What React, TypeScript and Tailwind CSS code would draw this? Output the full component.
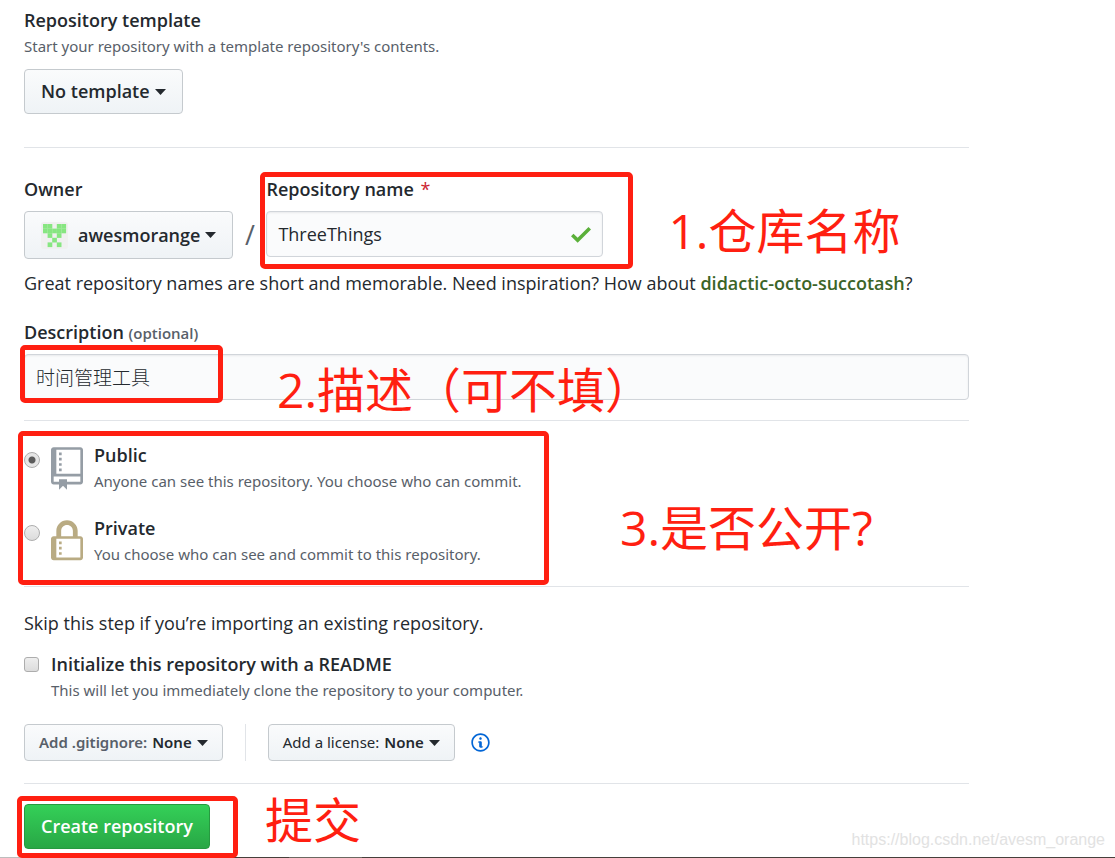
import { useState } from "react";
import type { ReactNode } from "react";

const btn =
  "flex items-center rounded border border-[#c5cace] bg-gradient-to-b from-[#fafbfc] to-[#eff3f6] font-semibold text-[#24292e]";

const field =
  "w-full h-[46px] rounded border border-[#d1d5da] bg-[#fafbfc] px-[11px] text-[#24292e] shadow-[inset_0_1px_2px_rgba(27,31,35,0.08)] outline-none";

function Caret() {
  return (
    <svg width="11" height="6" viewBox="0 0 11 6" fill="currentColor" aria-hidden="true">
      <path d="M0 0h11L5.5 6z" />
    </svg>
  );
}

function Identicon() {
  const rows = ["11011", "11111", "01010", "00100", "01010"];
  return (
    <svg width="27" height="27" viewBox="0 0 27 27" aria-hidden="true">
      <rect width="27" height="27" rx="3" fill="#f0f0f0" />
      {rows.map((row, y) =>
        row.split("").map((cell, x) =>
          cell === "1" ? (
            <rect
              key={`${x}-${y}`}
              x={2 + x * 4.6}
              y={2 + y * 4.6}
              width="4.7"
              height="4.7"
              fill="#87e681"
            />
          ) : null
        )
      )}
    </svg>
  );
}

function RepoIcon() {
  return (
    <svg width="32" height="43" viewBox="0 0 12 16" fill="#959da5" aria-hidden="true">
      <path
        fillRule="evenodd"
        d="M4 9H3V8h1v1zm0-3H3v1h1V6zm0-2H3v1h1V4zm0-2H3v1h1V2zm8-1v12c0 .55-.45 1-1 1H6v2l-1.5-1.5L3 16v-2H1c-.55 0-1-.45-1-1V1c0-.55.45-1 1-1h10c.55 0 1 .45 1 1zm-1 10H1v2h2v-1h3v1h5v-2zm0-10H2v9h9V1z"
      />
    </svg>
  );
}

function LockIcon() {
  return (
    <svg width="32" height="43" viewBox="0 0 12 16" fill="#b9ab83" aria-hidden="true">
      <path
        fillRule="evenodd"
        d="M4 13H3v-1h1v1zm8-6v7c0 .55-.45 1-1 1H1c-.55 0-1-.45-1-1V7c0-.55.45-1 1-1h1V4c0-2.2 1.8-4 4-4s4 1.8 4 4v2h1c.55 0 1 .45 1 1zM3.8 6h4.41V4c0-1.22-.98-2.2-2.2-2.2-1.22 0-2.2.98-2.2 2.2v2H3.8zM11 7H2v7h9V7zM4 8H3v1h1V8zm0 2H3v1h1v-1z"
      />
    </svg>
  );
}

function InfoIcon() {
  return (
    <svg width="19" height="21" viewBox="0 0 14 16" fill="#0366d6" aria-hidden="true">
      <path
        fillRule="evenodd"
        d="M6.3 5.69a.942.942 0 0 1-.28-.7c0-.28.09-.52.28-.7.19-.18.42-.28.7-.28.28 0 .52.09.7.28.18.19.28.42.28.7 0 .28-.09.52-.28.7a1 1 0 0 1-.7.3c-.28 0-.52-.11-.7-.3zM8 7.99c-.02-.25-.11-.48-.31-.69-.2-.19-.42-.3-.69-.31H6c-.27.02-.48.13-.69.31-.2.2-.3.44-.31.69h1v3c.02.27.11.5.31.69.2.2.42.31.69.31h1c.27 0 .48-.11.69-.31.2-.19.3-.42.31-.69H8V7.98v.01zM7 2.3c-3.14 0-5.7 2.54-5.7 5.68 0 3.14 2.56 5.7 5.7 5.7s5.7-2.55 5.7-5.7c0-3.15-2.56-5.69-5.7-5.69v.01zM7 .98c3.86 0 7 3.14 7 7s-3.14 7-7 7-7-3.12-7-7 3.14-7 7-7z"
      />
    </svg>
  );
}

// Red marker frame drawn on top of the form
function Frame({ className }: { className: string }) {
  return (
    <div
      className={`pointer-events-none absolute rounded-[5px] border-[5px] border-[#ff1f11] ${className}`}
    />
  );
}

function Note({ className, children }: { className: string; children: ReactNode }) {
  return (
    <p
      className={`pointer-events-none absolute whitespace-nowrap text-[48px] leading-[60px] text-[#ff1f11] ${className}`}
    >
      {children}
    </p>
  );
}

type VisibilityProps = {
  id: string;
  title: string;
  text: string;
  icon: ReactNode;
  checked: boolean;
  onChange: () => void;
};

function Visibility({ id, title, text, icon, checked, onChange }: VisibilityProps) {
  return (
    <div className="flex items-start">
      <input
        type="radio"
        id={id}
        name="visibility"
        checked={checked}
        onChange={onChange}
        className="mt-[11px] size-4 shrink-0 appearance-none rounded-full border border-[#adadad] bg-gradient-to-b from-[#eeeeee] to-[#dcdcdc] checked:bg-[radial-gradient(circle,#5c5c5c_0,#5c5c5c_3px,#e6e6e6_4px)]"
      />
      <div className="mt-[6px] ml-[11px] shrink-0">{icon}</div>
      <div className="ml-[11px]">
        <label htmlFor={id} className="block leading-7 font-semibold">
          {title}
        </label>
        <p className="font-['Noto_Sans',sans-serif] text-[15px] leading-6 text-[#586069]">{text}</p>
      </div>
    </div>
  );
}

export default function App() {
  const [visibility, setVisibility] = useState("public");

  return (
    <div className="relative overflow-hidden bg-white font-['Open_Sans','Noto_Sans_CJK_SC',sans-serif] text-[18px] text-[#24292e]">
      <form
        className="mx-6 max-w-[945px] pt-[6px] pb-2"
        onSubmit={(e) => e.preventDefault()}
      >
        <section className="border-b border-[#e1e4e8] pb-[33px]">
          <h2 className="leading-7 font-semibold">Repository template</h2>
          <p className="font-['Noto_Sans',sans-serif] text-[15px] leading-6 text-[#586069]">
            Start your repository with a template repository's contents.
          </p>
          <button type="button" aria-haspopup="menu" className={`${btn} mt-[11px] h-[45px] gap-[5px] px-4`}>
            No template <Caret />
          </button>
        </section>

        <section className="border-b border-[#e1e4e8] pt-[27px] pb-5">
          <div className="flex">
            <div>
              <span className="block leading-7 font-semibold">Owner</span>
              <button
                type="button"
                aria-haspopup="menu"
                className={`${btn} mt-2 h-12 gap-[5px] px-4`}
              >
                <Identicon />
                <span className="ml-[5px]">awesmorange</span>
                <Caret />
              </button>
            </div>
            <span className="mt-9 w-[33px] text-center text-[27px] leading-[48px] text-[#586069]">
              /
            </span>
            <div className="relative w-[337px]">
              <label htmlFor="repo-name" className="block leading-7 font-semibold">
                Repository name <span className="ml-[2px] font-normal text-[#cb2431]">*</span>
              </label>
              <div className="relative mt-2">
                <input
                  id="repo-name"
                  type="text"
                  defaultValue="ThreeThings"
                  className={`${field} text-[18px]`}
                />
                <svg
                  className="absolute top-[10px] right-3"
                  width="20"
                  height="27"
                  viewBox="0 0 12 16"
                  fill="#5bb03a"
                  aria-hidden="true"
                >
                  <path d="M12 5l-8 8-4-4 1.5-1.5L4 10l6.5-6.5L12 5z" />
                </svg>
              </div>
              <Frame className="-top-[3px] -right-[30px] -bottom-[10px] -left-[6px]" />
              <Note className="top-[26px] left-[402px]">1.仓库名称</Note>
            </div>
          </div>
          <p className="mt-[10px] leading-7">
            Great repository names are short and memorable. Need inspiration? How about{" "}
            <a href="#suggestion" className="font-semibold text-[#3b6427]">
              didactic-octo-succotash
            </a>
            ?
          </p>

          <div className="mt-[21px]">
            <label htmlFor="description" className="block leading-7 font-semibold">
              Description{" "}
              <span className="text-[15px] leading-none text-[#586069]">(optional)</span>
            </label>
            <div className="relative mt-2">
              <input
                id="description"
                type="text"
                defaultValue="时间管理工具"
                className={`${field} text-[19px] font-light`}
              />
              <Frame className="-top-[9px] -left-1 h-[58px] w-[203px]" />
              <Note className="top-[6px] left-[253px]">2.描述（可不填）</Note>
            </div>
          </div>
        </section>

        <section className="relative flex flex-col gap-[21px] border-b border-[#e1e4e8] py-5">
          <Visibility
            id="public"
            title="Public"
            text="Anyone can see this repository. You choose who can commit."
            icon={<RepoIcon />}
            checked={visibility === "public"}
            onChange={() => setVisibility("public")}
          />
          <Visibility
            id="private"
            title="Private"
            text="You choose who can see and commit to this repository."
            icon={<LockIcon />}
            checked={visibility === "private"}
            onChange={() => setVisibility("private")}
          />
          <Frame className="top-[10px] bottom-[1px] -left-[6px] w-[531px]" />
          <Note className="top-[77px] left-[596px]">3.是否公开?</Note>
        </section>

        <section className="border-b border-[#e1e4e8] py-[22px]">
          <p className="leading-7">Skip this step if you’re importing an existing repository.</p>
          <div className="mt-[13px] flex items-start">
            <input
              type="checkbox"
              id="readme"
              className="mt-[7px] size-[15px] shrink-0 appearance-none rounded-[3px] border border-[#adadad] bg-gradient-to-b from-[#eeeeee] to-[#dcdcdc] checked:bg-[#5c5c5c]"
            />
            <div className="ml-3">
              <label htmlFor="readme" className="block leading-7 font-semibold">
                Initialize this repository with a README
              </label>
              <p className="font-['Noto_Sans',sans-serif] text-[15px] leading-6 text-[#586069]">
                This will let you immediately clone the repository to your computer.
              </p>
            </div>
          </div>
          <div className="mt-[22px] flex items-center font-['Noto_Sans',sans-serif] text-[15px]">
            <button type="button" aria-haspopup="menu" className={`${btn} h-[37px] gap-[5px] px-[14px]`}>
              <span className="text-[#586069]">Add .gitignore:</span> None <Caret />
            </button>
            <div className="mx-[22px] h-[37px] border-l border-[#e1e4e8]" />
            <button type="button" aria-haspopup="menu" className={`${btn} h-[37px] gap-[5px] px-[14px]`}>
              <span className="font-normal">Add a license:</span> None <Caret />
            </button>
            <a href="#licenses" aria-label="About licenses" className="ml-4">
              <InfoIcon />
            </a>
          </div>
        </section>

        <div className="relative pt-5">
          <button
            type="submit"
            className="block h-[45px] rounded border border-[#269a40] bg-gradient-to-b from-[#34d058] to-[#28a745] px-4 font-semibold text-white"
          >
            Create repository
          </button>
          <Frame className="top-3 -left-[7px] h-[62px] w-[221px]" />
          <Note className="top-[6px] left-[241px]">提交</Note>
        </div>
      </form>
      <span className="absolute right-[10px] bottom-2 font-['Liberation_Sans',sans-serif] text-[16px] leading-5 text-[#e2e2e2]">
        https://blog.csdn.net/avesm_orange
      </span>
      <div className="flex h-px bg-[#463f3b]">
        <div className="w-[137px] bg-[#bdbdbd]" />
        <div className="ml-[152px] w-[73px] bg-[#6b6861]" />
      </div>
    </div>
  );
}
